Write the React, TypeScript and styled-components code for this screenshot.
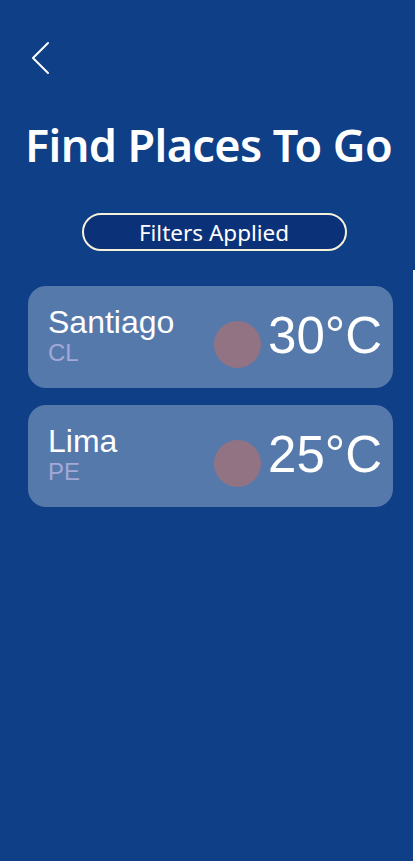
import React from "react";
import styled, { createGlobalStyle } from "styled-components";

const Global = createGlobalStyle`
  html, body { margin: 0; padding: 0; background: #ffffff; }
  #root { min-height: 861px; display: flex; }
`;

const Page = styled.div`
  width: 415px;
  min-height: 861px;
  display: flex;
  flex-direction: column;
`;

const Header = styled.header`
  width: 415px;
  height: 270px;
  background: #0e3f87;
  display: flex;
  flex-direction: column;
  align-items: center;
  box-sizing: border-box;
  padding-top: 41px;
`;

const BackRow = styled.div`
  align-self: stretch;
  padding-left: 30px;
  height: 34px;
  display: flex;
  align-items: center;
`;

const BackButton = styled.button`
  background: none;
  border: none;
  padding: 0;
  width: 20px;
  height: 34px;
  cursor: pointer;
  display: flex;
  align-items: center;
`;

const Title = styled.h1`
  margin: 42px 0 0 2px;
  font-family: "Noto Sans", "Open Sans", sans-serif;
  font-weight: 600;
  font-size: 45px;
  line-height: 56px;
  color: #ffffff;
  letter-spacing: -0.6px;
`;

const FilterPill = styled.div`
  margin: 40px 0 0 13px;
  width: 265px;
  height: 38px;
  box-sizing: border-box;
  border: 2px solid #f6f1d8;
  border-radius: 19px;
  background: #0b3179;
  display: flex;
  align-items: center;
  justify-content: center;
  font-family: "Noto Sans", "Open Sans", sans-serif;
  font-size: 22.5px;
  color: #ffffff;
`;

const List = styled.main`
  width: 413px;
  flex: 1;
  background: #0e3f87;
  box-sizing: border-box;
  padding: 16px 0 0 28px;
  display: flex;
  flex-direction: column;
  gap: 17px;
`;

const Card = styled.div`
  width: 365px;
  height: 102px;
  box-sizing: border-box;
  border-radius: 18px;
  background: #5679ab;
  display: flex;
  align-items: center;
  padding: 0 11px 0 20px;
  font-family: "Liberation Sans", Arial, sans-serif;
`;

const Place = styled.div`
  flex: 1;
  display: flex;
  flex-direction: column;
  margin-top: -2px;
`;

const City = styled.div`
  font-size: 32px;
  line-height: 34px;
  color: #ffffff;
`;

const Country = styled.div`
  font-size: 24px;
  line-height: 28px;
  color: #a3a8d8;
`;

const Dot = styled.div`
  width: 47px;
  height: 47px;
  border-radius: 50%;
  background: #927384;
  margin-top: 15px;
  margin-right: 7px;
`;

const Temp = styled.div`
  font-size: 51px;
  line-height: 56px;
  color: #ffffff;
  margin-top: -2px;
`;

const places = [
  { city: "Santiago", country: "CL", temp: 30 },
  { city: "Lima", country: "PE", temp: 25 },
];

export default function App() {
  return (
    <>
      <Global />
      <Page>
        <Header>
          <BackRow>
            <BackButton aria-label="Back">
              <svg width="20" height="34" viewBox="0 0 20 34" fill="none">
                <path d="M18 2 L3 17 L18 32" stroke="#ffffff" strokeWidth="2" strokeLinecap="round" strokeLinejoin="round" />
              </svg>
            </BackButton>
          </BackRow>
          <Title>Find Places To Go</Title>
          <FilterPill>Filters Applied</FilterPill>
        </Header>
        <List>
          {places.map((p) => (
            <Card key={p.city}>
              <Place>
                <City>{p.city}</City>
                <Country>{p.country}</Country>
              </Place>
              <Dot />
              <Temp>{p.temp}°C</Temp>
            </Card>
          ))}
        </List>
      </Page>
    </>
  );
}
